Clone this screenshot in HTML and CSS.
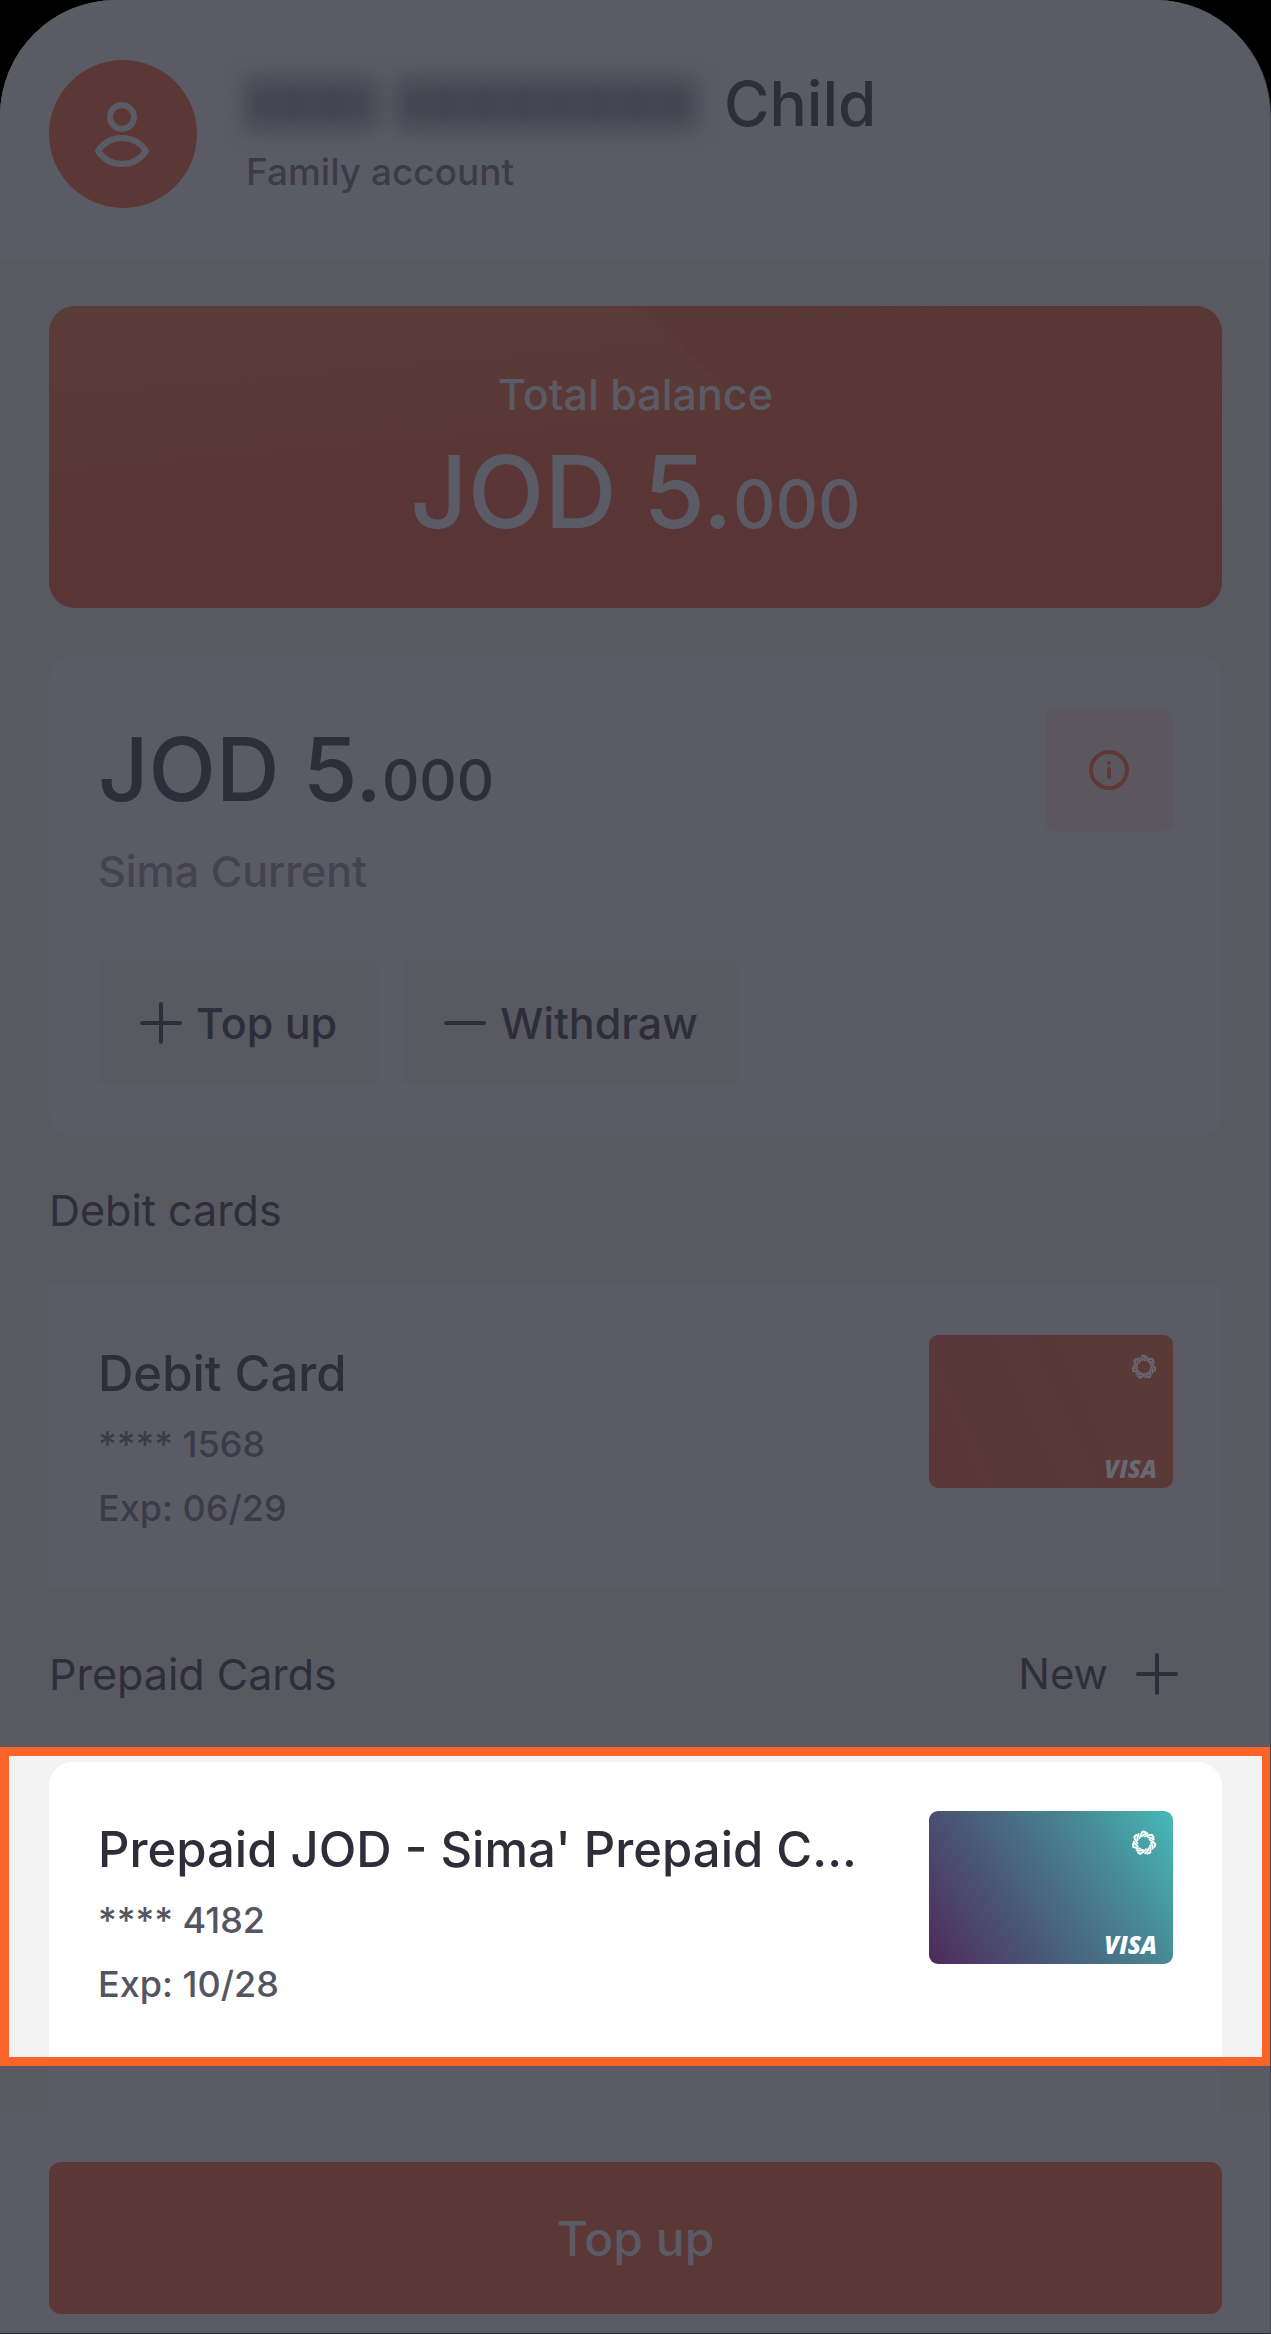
FILE: index.html
```html
<!DOCTYPE html>
<html lang="en">
<head>
<meta charset="utf-8">
<meta name="viewport" content="width=device-width, initial-scale=1">
<title>Family account</title>
<link rel="stylesheet" href="styles.css">
</head>
<body>
<svg class="defs" aria-hidden="true">
  <symbol id="plus" viewBox="0 0 42 42"><path d="M21 2v38M2 21h38" fill="none" stroke="currentColor" stroke-width="4" stroke-linecap="round"/></symbol>
  <symbol id="minus" viewBox="0 0 42 42"><path d="M2 21h38" fill="none" stroke="currentColor" stroke-width="4" stroke-linecap="round"/></symbol>
  <symbol id="flower" viewBox="-13 -13 26 26">
    <g fill="none" stroke="currentColor" stroke-linejoin="round" stroke-linecap="round">
      <g id="petal"><path d="M-3.4 -8L-1.4 -11.4L1.4 -11" stroke-width="2"/><path d="M-2 -6.8L.4 -8.6L3.4 -9.8" stroke-width="2"/><path d="M.8 -6.4L3.8 -7.4" stroke-width="1.6"/></g>
      <use href="#petal" transform="rotate(51.43)"/><use href="#petal" transform="rotate(102.86)"/><use href="#petal" transform="rotate(154.29)"/>
      <use href="#petal" transform="rotate(205.71)"/><use href="#petal" transform="rotate(257.14)"/><use href="#petal" transform="rotate(308.57)"/>
    </g>
  </symbol>
</svg>
<div class="screen">
  <header class="profile">
    <div class="avatar">
      <svg width="56" height="66" viewBox="0 0 56 66" fill="none" stroke="currentColor" stroke-width="6" aria-hidden="true"><circle cx="27" cy="16" r="12"/><path d="M3 50C9 41 18 37 27 37s18 4 24 13c-6 9-15 13-24 13S9 59 3 50z" stroke-linejoin="round"/></svg>
    </div>
    <div class="who">
      <h1 class="name"><span class="redacted" aria-hidden="true"><i class="first"></i><i class="last"></i></span>Child</h1>
      <p class="kind">Family account</p>
    </div>
  </header>
  <main class="content">
    <section class="total">
      <p class="total-label">Total balance</p>
      <p class="total-sum">JOD 5.<small>000</small></p>
    </section>
    <section class="account">
      <div class="account-top">
        <div>
          <p class="account-sum">JOD 5.<small>000</small></p>
          <p class="account-name">Sima Current</p>
        </div>
        <button class="info" aria-label="Account details"><svg width="42" height="42" viewBox="0 0 42 42" aria-hidden="true"><circle cx="21" cy="21" r="18" fill="none" stroke="currentColor" stroke-width="4"/><circle cx="21" cy="14" r="2" fill="currentColor"/><path d="M21 20v8" stroke="currentColor" stroke-width="4" stroke-linecap="round"/></svg></button>
      </div>
      <div class="actions">
        <button class="action"><svg class="sign" aria-hidden="true"><use href="#plus"/></svg>Top up</button>
        <button class="action"><svg class="sign" aria-hidden="true"><use href="#minus"/></svg>Withdraw</button>
      </div>
    </section>
    <h2 class="heading">Debit cards</h2>
    <section class="card">
      <div class="card-text">
        <h3 class="card-title">Debit Card</h3>
        <p class="card-line">**** 1568</p>
        <p class="card-line">Exp: 06/29</p>
      </div>
      <div class="plastic debit"><svg class="flower" aria-hidden="true"><use href="#flower"/></svg><span class="visa">VISA</span></div>
    </section>
    <div class="heading-row">
      <h2 class="heading">Prepaid Cards</h2>
      <button class="new">New<svg class="sign" aria-hidden="true"><use href="#plus"/></svg></button>
    </div>
  </main>
  <div class="spotlight">
    <section class="card lit">
      <div class="card-text">
        <h3 class="card-title">Prepaid JOD - Sima' Prepaid C...</h3>
        <p class="card-line">**** 4182</p>
        <p class="card-line">Exp: 10/28</p>
      </div>
      <div class="plastic prepaid"><svg class="flower" aria-hidden="true"><use href="#flower"/></svg><span class="visa">VISA</span></div>
    </section>
  </div>
  <div class="card-tail"></div>
  <footer class="footer"><button class="topup">Top up</button></footer>
</div>
</body>
</html>
```
FILE: styles.css
```css
* { box-sizing: border-box; }
body { margin: 0; background: #000; font-family: Inter, "Liberation Sans", sans-serif; font-weight: 500; color: #2e2e3b; }
h1, h2, h3, p { margin: 0; font-weight: 500; }
button { font: inherit; color: inherit; border: 0; padding: 0; cursor: pointer; }
svg { display: block; flex: none; }
.defs { position: absolute; width: 0; height: 0; }
.screen { background: #595961; border-radius: 116px 116px 0 0; overflow: hidden; border-right: 1px solid #464653; border-bottom: 1px solid #2e2e3b; }

.profile { display: flex; align-items: center; gap: 49px; height: 258px; padding: 10px 49px 0; background: #5b5b66; }
.avatar { display: flex; align-items: center; justify-content: center; width: 148px; height: 148px; border-radius: 50%; background: #5b3836; color: #5b5b66; }
.who { padding-bottom: 6px; }
.name { display: flex; align-items: center; gap: 26px; font-size: 62px; line-height: 72px; }
.kind { font-size: 37px; line-height: 44px; margin-top: 10px; color: #3b3b48; }
.redacted { display: flex; gap: 22px; filter: blur(11px); }
.redacted i { height: 50px; background: repeating-linear-gradient(90deg, #42424e 0 20px, #484854 20px 38px); }
.first { width: 130px; }
.last { width: 300px; }

.content { padding: 48px 48px 0 49px; }
.total { height: 302px; padding-top: 62px; border-radius: 26px; text-align: center; color: #5b5b66; background: linear-gradient(43deg, transparent 61%, #58343466 61%), linear-gradient(175deg, #5b3b37, #593535 75%); }
.total-label { font-size: 43px; line-height: 52px; }
.total-sum { font-size: 100px; line-height: 120px; margin-top: 12px; }
.total-sum small { font-size: 66px; }

.account { margin-top: 48px; height: 480px; padding: 53px 49px 0; border-radius: 24px; background: #5b5b66; }
.account-top { display: flex; justify-content: space-between; }
.account-sum { font-size: 88px; line-height: 104px; margin-top: 8px; }
.account-sum small { font-size: 58px; }
.account-name { font-size: 43px; line-height: 52px; margin-top: 13px; color: #43434f; }
.info { display: flex; align-items: center; justify-content: center; width: 128px; height: 122px; border-radius: 8px; background: #5c575f; color: #5f3836; }
.actions { display: flex; gap: 24px; margin-top: 63px; }
.action { display: flex; align-items: center; gap: 14px; height: 125px; padding: 0 41px 0 42px; border-radius: 8px; background: #595961; font-size: 43px; }
.sign { width: 42px; height: 42px; }

.heading { font-size: 43px; line-height: 52px; font-weight: 400; }
.account + .heading { margin-top: 48px; }
.card { display: flex; justify-content: space-between; height: 301px; margin-top: 50px; padding: 49px 49px 0; background: #5b5b66; }
.card-title { font-size: 49px; line-height: 60px; margin-top: 9px; white-space: nowrap; }
.card-line { font-size: 36px; line-height: 44px; margin-top: 18px; color: #3b3b48; }
.card-line + .card-line { margin-top: 20px; }
.plastic { display: flex; flex-direction: column; align-items: flex-end; justify-content: space-between; width: 244px; height: 153px; padding: 19px 16px 6px; border-radius: 9px; }
.debit { background: linear-gradient(65deg, #5b3638, #583838 50%, #5b3935); color: #686874; }
.prepaid { background: linear-gradient(58deg, #4f2a5b, #495877 35%, #488895 70%, #46bab9); color: #fff; }
.flower { width: 26px; height: 26px; }
.visa { font: italic 800 24px/26px "Open Sans", sans-serif; }
.heading-row { display: flex; justify-content: space-between; align-items: center; margin-top: 61px; }
.new { display: flex; align-items: center; gap: 28px; padding-right: 44px; background: none; font-size: 42px; line-height: 52px; font-weight: 400; }

.spotlight { margin-top: 47px; margin-right: -1px; height: 319px; padding: 6px 40px 0; border: 9px solid #fb6428; background: #f3f3f3; }
.lit { height: 295px; margin-top: 0; border-radius: 24px 24px 0 0; background: #fff; }
.lit .card-line { color: #555562; }
.card-tail { height: 46px; margin: 0 48px 0 49px; background: #5b5b66; }
.footer { padding: 50px 48px 19px 49px; background: #5b5b66; }
.topup { display: block; width: 100%; height: 152px; border-radius: 12px; background: #5b3836; color: #5b5b66; font-size: 48px; }
```
